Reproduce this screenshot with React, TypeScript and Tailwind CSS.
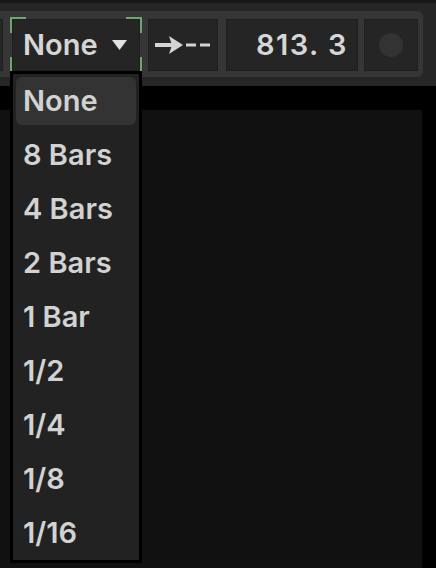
import React from "react";

const items = ["None", "8 Bars", "4 Bars", "2 Bars", "1 Bar", "1/2", "1/4", "1/8", "1/16"];

function Bracket({ pos }: { pos: string }) {
  return <span className={`absolute w-[16px] h-[16px] border-[#6fa56f] ${pos}`} />;
}

export default function App() {
  return (
    <div
      className="relative w-[436px] h-[568px] bg-black overflow-hidden flex flex-col"
      style={{ fontFamily: "Inter, 'Noto Sans', sans-serif" }}
    >
      {/* toolbar */}
      <div className="h-[86px] shrink-0 bg-[#262626] border-t-[3px] border-[#181818] flex items-start">
        <div className="ml-[-60px] mt-[8px] h-[66px] rounded-[6px] bg-[#363636] pt-[8px] pl-[5px] pr-[5px] flex items-start">
          <div className="w-[58px] h-[52px] bg-[#262626] border border-[#1f1f1f]" />
          <div className="relative ml-[9px] w-[128px] h-[52px] bg-[#252525] border border-[#1f1f1f] flex items-center pl-[10px]">
            <span className="text-[29px] font-semibold text-[#d6d6d6] leading-none mt-[-2px]">None</span>
            <svg className="ml-[14px]" width="15" height="10" viewBox="0 0 15 10">
              <polygon points="0,0 15,0 7.5,10" fill="#e2e2e2" />
            </svg>
            <Bracket pos="-left-[3px] -top-[3px] border-l-2 border-t-2" />
            <Bracket pos="-right-[3px] -top-[3px] border-r-2 border-t-2" />
            <Bracket pos="-left-[3px] -bottom-[3px] border-l-2 border-b-2" />
            <Bracket pos="-right-[3px] -bottom-[3px] border-r-2 border-b-2" />
          </div>
          <div className="ml-[8px] w-[70px] h-[52px] bg-[#252525] border border-[#1f1f1f] flex items-center justify-center">
            <svg width="56" height="18" viewBox="0 0 56 18">
              <rect x="0" y="7" width="19" height="4" fill="#d4d4d4" />
              <polygon points="14,0 28,9 14,18 17,9" fill="#d4d4d4" />
              <rect x="31" y="7.5" width="10" height="3" fill="#d4d4d4" />
              <rect x="45" y="7.5" width="10" height="3" fill="#d4d4d4" />
            </svg>
          </div>
          <div className="ml-[8px] w-[132px] h-[52px] bg-[#252525] border border-[#1f1f1f] flex items-center justify-end pr-[9px]">
            <span className="text-[29px] font-semibold text-[#d6d6d6] leading-none tracking-[1.5px] mt-[-2px]">813. 3</span>
          </div>
          <div className="ml-[6px] w-[54px] h-[52px] bg-[#252525] border border-[#1f1f1f] flex items-center justify-center">
            <div className="w-[24px] h-[24px] rounded-full bg-[#333333]" />
          </div>
        </div>
      </div>
      <div className="h-[24px] shrink-0 bg-black" />
      <div className="flex-1 w-[422px] bg-[#111111]" />

      {/* dropdown menu */}
      <div className="absolute left-[10px] top-[71px] w-[132px] h-[492px] border-[3px] border-black bg-[#222222] flex flex-col">
        {items.map((it, i) => (
          <div key={it} className="h-[54px] p-[3px]">
            <div
              className={`h-full rounded-[6px] flex items-center pl-[7px] ${i === 0 ? "bg-[#333333]" : ""}`}
            >
              <span className="text-[29px] font-semibold text-[#d2d2d2] leading-none mt-[-2px]">{it}</span>
            </div>
          </div>
        ))}
      </div>
    </div>
  );
}
